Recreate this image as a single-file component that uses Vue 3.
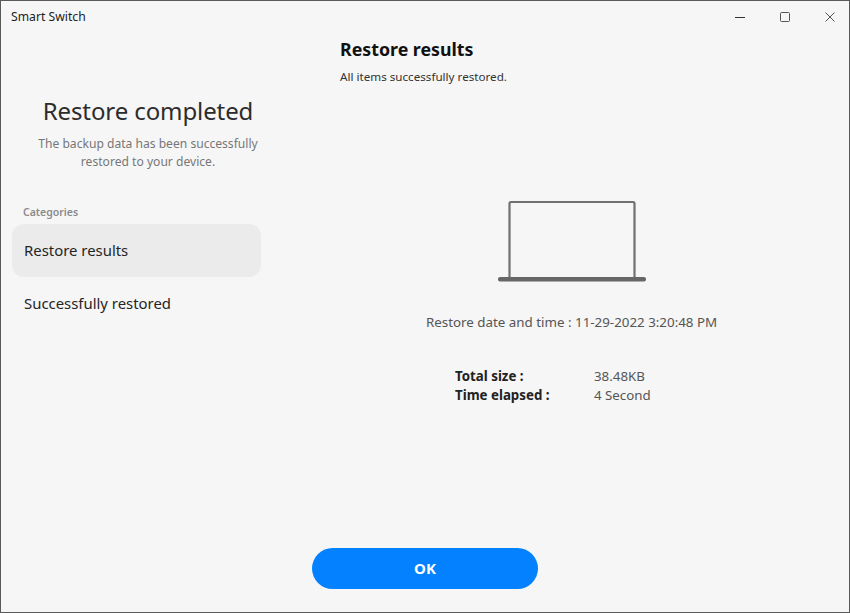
<script setup>
const stats = [
  { label: 'Total size :', value: '38.48KB' },
  { label: 'Time elapsed :', value: '4 Second' }
]
</script>

<template>
  <div class="window">
    <header class="titlebar">
      <span class="app-name">Smart Switch</span>
      <div class="controls">
        <svg width="12" height="12" viewBox="0 0 12 12"><path d="M1 6.5h10" stroke="#333" stroke-width="1" fill="none"/></svg>
        <svg width="12" height="12" viewBox="0 0 12 12"><rect x="1.5" y="1.5" width="9" height="9" rx="1" stroke="#555" stroke-width="1" fill="none"/></svg>
        <svg width="12" height="12" viewBox="0 0 12 12"><path d="M1.5 1.5l9 9M10.5 1.5l-9 9" stroke="#555" stroke-width="1" fill="none"/></svg>
      </div>
    </header>
    <div class="body">
      <aside class="side">
        <h1 class="done">Restore completed</h1>
        <p class="done-sub">The backup data has been successfully<br>restored to your device.</p>
        <div class="cat">Categories</div>
        <div class="item active">Restore results</div>
        <div class="item">Successfully restored</div>
      </aside>
      <main class="main">
        <h2 class="heading">Restore results</h2>
        <p class="sub">All items successfully restored.</p>
        <svg class="laptop" width="150" height="86" viewBox="0 0 150 86">
          <path d="M11.5 80V5.5a1.5 1.5 0 0 1 1.5-1.5H135a1.5 1.5 0 0 1 1.5 1.5V80" fill="none" stroke="#707070" stroke-width="2.2"/>
          <rect x="0" y="79" width="148" height="4.5" rx="2" fill="#666"/>
        </svg>
        <p class="date">Restore date and time : 11-29-2022 3:20:48 PM</p>
        <dl class="stats">
          <template v-for="s in stats" :key="s.label">
            <dt>{{ s.label }}</dt>
            <dd>{{ s.value }}</dd>
          </template>
        </dl>
      </main>
    </div>
    <div class="footer"><button class="ok">OK</button></div>
  </div>
</template>

<style>
html, body { margin: 0; background: #f6f6f6; }
</style>

<style scoped>
.window {
  width: 850px;
  height: 613px;
  box-sizing: border-box;
  border: 1px solid #5a5a5a;
  background: #f6f6f6;
  font-family: "Noto Sans", "Open Sans", sans-serif;
  color: #222;
  display: flex;
  flex-direction: column;
  position: relative;
}
.titlebar {
  height: 30px;
  flex: none;
  display: flex;
  align-items: center;
  justify-content: space-between;
  padding-left: 10px;
}
.app-name { font-size: 12.2px; color: #222; }
.controls {
  display: flex;
  gap: 33px;
  padding-right: 13px;
  padding-top: 1px;
}
.body { flex: 1; display: flex; min-height: 0; }
.side { width: 272px; margin-left: 11px; margin-right: 2px; flex: none; }
.done {
  margin: 63px 0 0;
  font-size: 24px;
  font-weight: 400;
  line-height: 34px;
  text-align: center;
  color: #2c2c2c;
  letter-spacing: -0.1px;
}
.done-sub {
  margin: 7px 0 0;
  font-size: 12.1px;
  line-height: 18px;
  text-align: center;
  color: #767676;
}
.cat {
  margin: 33px 0 0 11px;
  font-size: 10.5px;
  font-weight: 600;
  line-height: 16px;
  color: #8b8b8b;
}
.item {
  width: 237px;
  height: 53px;
  line-height: 53px;
  padding-left: 12px;
  font-size: 14.9px;
  border-radius: 12px;
  color: #252525;
}
.cat + .item { margin-top: 4px; }
.active { background: #ebebeb; }
.main { flex: 1; padding-left: 54px; position: relative; }
.heading {
  margin: 6px 0 0;
  font-size: 17.8px;
  font-weight: 700;
  line-height: 24px;
  color: #111;
}
.sub { margin: 8px 0 0; font-size: 11.65px; line-height: 16px; color: #333; }
.laptop { display: block; margin: 113px 0 0 158px; }
.date {
  margin: 28px 0 0 86px;
  font-size: 13.35px;
  line-height: 20px;
  color: #555;
}
.stats {
  margin: 35px 0 0 115px;
  display: grid;
  grid-template-columns: 139px auto;
  font-size: 13.3px;
  line-height: 19px;
}
.stats dt { font-weight: 700; color: #222; }
.stats dd { margin: 0; color: #555; }
.footer {
  flex: none;
  display: flex;
  justify-content: center;
  padding-bottom: 23px;
}
.ok {
  width: 226px;
  height: 41px;
  border: none;
  border-radius: 21px;
  background: #0381fe;
  color: #fff;
  font-family: inherit;
  font-size: 15px;
  font-weight: 700;
  padding: 0 0 2px;
}
</style>
